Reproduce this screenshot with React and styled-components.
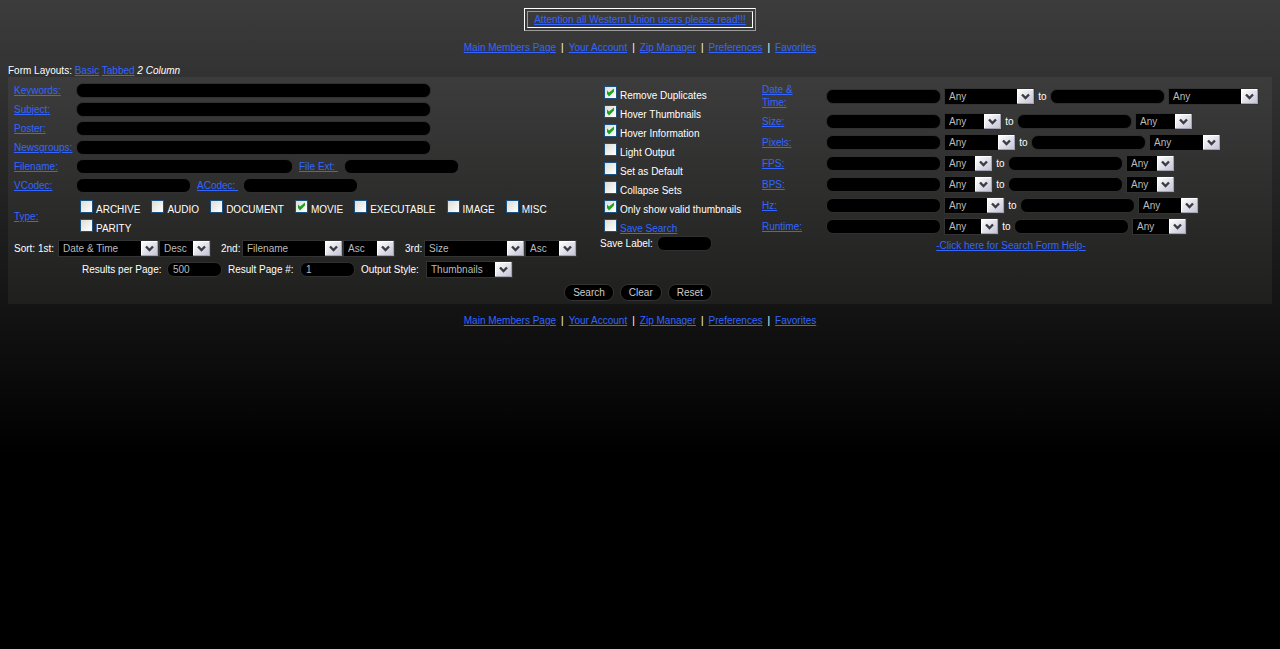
import React from "react";
import styled, { createGlobalStyle } from "styled-components";

const GlobalStyle = createGlobalStyle`
  * { box-sizing: border-box; }
  html {
    min-height: 100%;
    background: #000 linear-gradient(#3c3c3c, #000 456px) no-repeat;
  }
  body {
    margin: 0;
    padding: 8px;
    color: #fff;
    font: 10px/13px "Liberation Sans", Arial, sans-serif;
  }
  input, select, button { font: inherit; }
`;

const Page = styled.div`
  display: flex;
  flex-direction: column;
`;

const Link = styled.a`
  color: #36f;
  text-decoration: underline;
`;

const Notice = styled.div`
  align-self: center;
  padding: 2px;
  border: 1px solid;
  border-color: #fff #999 #999 #fff;
`;

const NoticeCell = styled.div`
  min-width: 226px;
  padding: 1px;
  border: 1px solid;
  border-color: #999 #fff #fff #999;
  text-align: center;
`;

const Nav = styled.nav`
  display: flex;
  justify-content: center;
  gap: 5px;
  margin: 10px 0;
`;

const Panel = styled.form`
  padding: 4px 6px 3px;
  background: linear-gradient(#3c3c3c, #1f1f1e);
`;

const Columns = styled.div`
  display: grid;
  grid-template-columns: 586px 162px minmax(0, 1fr);
`;

const Column = styled.div`
  display: flex;
  flex-direction: column;
`;

const Row = styled.div`
  display: flex;
  align-items: center;
  gap: ${(p) => p.$gap || 0}px;
  height: ${(p) => p.$height || 19}px;
  padding-left: ${(p) => p.$indent || 0}px;
`;

const Label = styled.label`
  flex: none;
  width: ${(p) => (p.$width ? p.$width + "px" : "auto")};
  padding-left: ${(p) => p.$indent || 0}px;
  white-space: ${(p) => (p.$wrap ? "normal" : "nowrap")};
`;

const TextInput = styled.input`
  flex: none;
  width: ${(p) => p.$width}px;
  height: 15px;
  margin: 0;
  padding: 0 5px;
  border: 1px solid #303030;
  border-radius: 7px;
  outline: 0;
  background: #000;
  color: #bbb;
`;

const SelectBox = styled.span`
  position: relative;
  flex: none;
  display: block;
  width: ${(p) => p.$width}px;
  height: 17px;
  border: 1px solid #333;

  select {
    appearance: none;
    display: block;
    width: 100%;
    height: 15px;
    margin: 0;
    padding: 0 17px 0 4px;
    border: 0;
    border-radius: 0;
    outline: 0;
    background: #000;
    color: #bbb;
  }
  svg {
    position: absolute;
    top: 0;
    right: 0;
    pointer-events: none;
  }
`;

const TickLabel = styled.label`
  display: flex;
  align-items: flex-start;
  gap: 3px;
  height: 19px;
  padding-top: 5px;
  white-space: nowrap;
`;

const TickBox = styled.span`
  position: relative;
  flex: none;
  width: 13px;
  height: 13px;

  input {
    appearance: none;
    display: block;
    width: 13px;
    height: 13px;
    margin: 0;
    border: 1px solid #1c5180;
    background: linear-gradient(135deg, #dcdcd7, #fff);
  }
  svg {
    display: none;
    position: absolute;
    inset: 0;
    pointer-events: none;
  }
  input:checked + svg { display: block; }
`;

const TickText = styled.span`
  padding-top: 3px;
`;

const TypeRow = styled.div`
  display: flex;
  align-items: center;
  min-height: 43px;
`;

const TypeName = styled.span`
  width: 66px;
`;

const TypeList = styled.div`
  flex: 1;
  align-self: flex-start;
  display: flex;
  flex-wrap: wrap;
  column-gap: 11px;
  padding-right: 20px;
`;

const Options = styled.div`
  padding-left: 4px;
`;

const To = styled.span`
  width: 9px;
  text-align: center;
`;

const Help = styled.div`
  padding: 2px 6px 0 0;
  text-align: center;
`;

const Actions = styled.div`
  display: flex;
  justify-content: center;
  gap: 6px;
  margin-top: 4px;
  padding-right: 4px;
`;

const Button = styled.button`
  height: 17px;
  padding: 0 8px;
  border: 1px solid #333;
  border-radius: 8px;
  background: #000;
  color: #ccc;
  line-height: 13px;
`;

function Select({ width, options, ...rest }) {
  return (
    <SelectBox $width={width}>
      <select {...rest}>
        {options.map((o) => (
          <option key={o}>{o}</option>
        ))}
      </select>
      <svg width="17" height="15" viewBox="0 0 17 15" aria-hidden="true">
        <defs>
          <linearGradient id="knob" x1="0" y1="0" x2="1" y2="1">
            <stop offset="0" stopColor="#fff" />
            <stop offset="1" stopColor="#c4c4d6" />
          </linearGradient>
        </defs>
        <rect width="17" height="15" fill="#a3a3b4" />
        <rect x="0" y="0" width="16" height="14" fill="#fff" />
        <rect x="1" y="1" width="15" height="13" fill="url(#knob)" />
        <path d="M5 5.5L8.5 9L12 5.5" fill="none" stroke="#3c3c44" strokeWidth="2.4" />
      </svg>
    </SelectBox>
  );
}

function Tick({ checked, children }) {
  return (
    <TickLabel>
      <TickBox>
        <input type="checkbox" defaultChecked={checked} />
        <svg width="13" height="13" viewBox="0 0 13 13" aria-hidden="true">
          <path d="M3 4.5L5 6.5L10 2.5V5.5L5 10.5L3 8z" fill="#21a121" />
        </svg>
      </TickBox>
      <TickText>{children}</TickText>
    </TickLabel>
  );
}

function FieldLink({ id, width, wrap, indent, children }) {
  return (
    <Label htmlFor={id} $width={width} $wrap={wrap} $indent={indent}>
      <Link href="#">{children}</Link>
    </Label>
  );
}

const links = ["Main Members Page", "Your Account", "Zip Manager", "Preferences", "Favorites"];

function MemberNav() {
  return (
    <Nav>
      {links.map((l, i) => (
        <React.Fragment key={l}>
          {i > 0 && <span>|</span>}
          <Link href="#">{l}</Link>
        </React.Fragment>
      ))}
    </Nav>
  );
}

const types = ["ARCHIVE", "AUDIO", "DOCUMENT", "MOVIE", "EXECUTABLE", "IMAGE", "MISC", "PARITY"];

const options = [
  ["Remove Duplicates", true],
  ["Hover Thumbnails", true],
  ["Hover Information", true],
  ["Light Output", false],
  ["Set as Default", false],
  ["Collapse Sets", false],
  ["Only show valid thumbnails", true],
];

const ranges = [
  ["Date & Time:", 91, 30],
  ["Size:", 58, 21],
  ["Pixels:", 72, 21],
  ["FPS:", 49, 21],
  ["BPS:", 49, 21],
  ["Hz:", 61, 21],
  ["Runtime:", 55, 21],
];

export default function App() {
  return (
    <Page>
      <GlobalStyle />
      <Notice>
        <NoticeCell>
          <Link href="#">Attention all Western Union users please read!!!</Link>
        </NoticeCell>
      </Notice>
      <MemberNav />
      <div>
        Form Layouts: <Link href="#">Basic</Link> <Link href="#">Tabbed</Link> <em>2 Column</em>
      </div>
      <Panel onSubmit={(e) => e.preventDefault()}>
        <Columns>
          <Column>
            {["Keywords", "Subject", "Poster", "Newsgroups"].map((n) => (
              <Row key={n}>
                <FieldLink id={n} width={62}>{n}:</FieldLink>
                <TextInput id={n} $width={355} />
              </Row>
            ))}
            <Row>
              <FieldLink id="filename" width={62}>Filename:</FieldLink>
              <TextInput id="filename" $width={217} />
              <FieldLink id="ext" width={51} indent={6}>File Ext:&nbsp;</FieldLink>
              <TextInput id="ext" $width={115} />
            </Row>
            <Row>
              <FieldLink id="vcodec" width={62}>VCodec:</FieldLink>
              <TextInput id="vcodec" $width={115} />
              <FieldLink id="acodec" width={52} indent={6}>ACodec:&nbsp;</FieldLink>
              <TextInput id="acodec" $width={115} />
            </Row>
            <TypeRow role="group" aria-labelledby="type-name">
              <TypeName id="type-name"><Link href="#">Type:</Link></TypeName>
              <TypeList>
                {types.map((t) => (
                  <Tick key={t} checked={t === "MOVIE"}>{t}</Tick>
                ))}
              </TypeList>
            </TypeRow>
            <Row $height={21}>
              <Label htmlFor="sort1" $width={44}>Sort: 1st:</Label>
              <Select id="sort1" width={101} options={["Date & Time"]} />
              <Select aria-label="1st order" width={52} options={["Desc"]} />
              <Label htmlFor="sort2" $width={31} $indent={10}>2nd:</Label>
              <Select id="sort2" width={101} options={["Filename"]} />
              <Select aria-label="2nd order" width={52} options={["Asc"]} />
              <Label htmlFor="sort3" $width={29} $indent={10}>3rd:</Label>
              <Select id="sort3" width={101} options={["Size"]} />
              <Select aria-label="3rd order" width={52} options={["Asc"]} />
            </Row>
            <Row $height={21} $indent={68}>
              <Label htmlFor="perpage" $width={85}>Results per Page:</Label>
              <TextInput id="perpage" $width={55} defaultValue="500" />
              <Label htmlFor="pageno" $width={78} $indent={6}>Result Page #:</Label>
              <TextInput id="pageno" $width={55} defaultValue="1" />
              <Label htmlFor="style" $width={71} $indent={6}>Output Style:</Label>
              <Select id="style" width={87} options={["Thumbnails"]} />
            </Row>
          </Column>
          <Column>
            <Options>
              {options.map(([name, on]) => (
                <Tick key={name} checked={on}>{name}</Tick>
              ))}
              <Tick><Link href="#">Save Search</Link></Tick>
            </Options>
            <Row $height={21}>
              <Label htmlFor="savelabel" $width={57}>Save Label:</Label>
              <TextInput id="savelabel" $width={55} />
            </Row>
          </Column>
          <Column>
            {ranges.map(([name, width, height]) => (
              <Row key={name} $gap={3} $height={height}>
                <FieldLink id={name} width={61} wrap>
                  {name === "Date & Time:" ? <>Date &amp;<br />Time:</> : name}
                </FieldLink>
                <TextInput id={name} $width={115} />
                <Select aria-label={name + " from unit"} width={width} options={["Any"]} />
                <To>to</To>
                <TextInput aria-label={name + " upper limit"} $width={115} />
                <Select aria-label={name + " to unit"} width={width} options={["Any"]} />
              </Row>
            ))}
            <Help>
              <Link href="#">-Click here for Search Form Help-</Link>
            </Help>
          </Column>
        </Columns>
        <Actions>
          <Button type="submit">Search</Button>
          <Button type="button">Clear</Button>
          <Button type="reset">Reset</Button>
        </Actions>
      </Panel>
      <MemberNav />
    </Page>
  );
}
